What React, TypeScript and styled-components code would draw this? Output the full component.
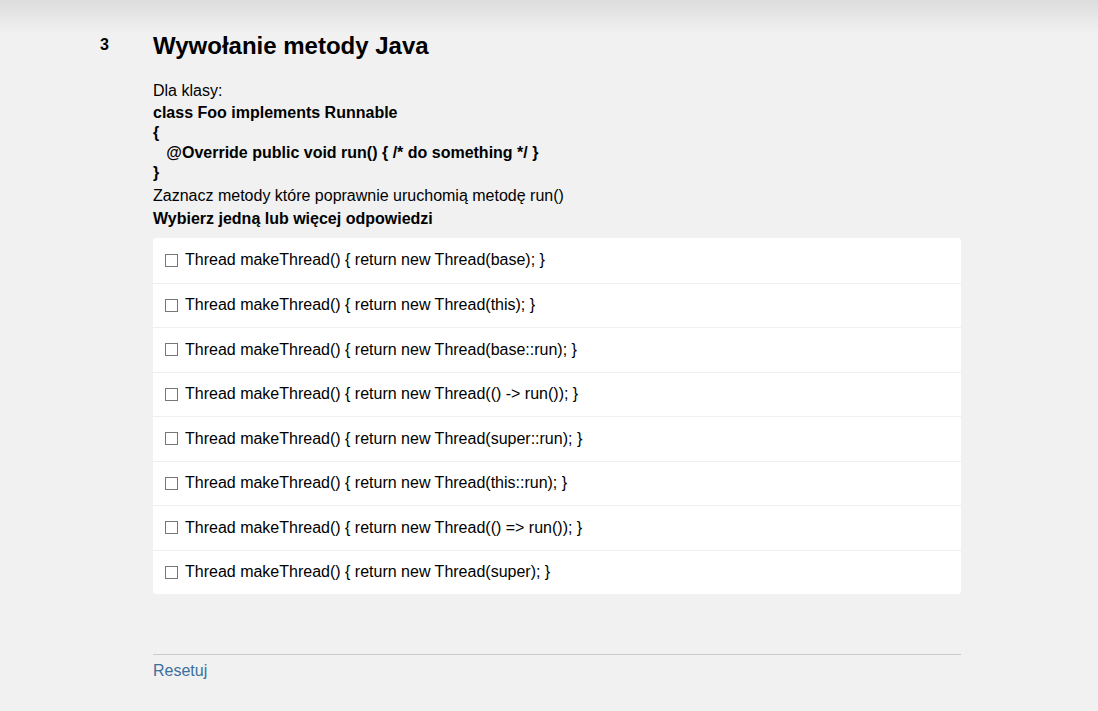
import React from "react";
import styled, { createGlobalStyle } from "styled-components";

const Global = createGlobalStyle`
  html, body { margin: 0; padding: 0; }
  body {
    background: #f1f1f1;
    font-family: "Liberation Sans", Arial, sans-serif;
    color: #000;
    min-height: 711px;
  }
`;

const Page = styled.div`
  position: relative;
  min-height: 711px;
  background: linear-gradient(to bottom, #dddddd 0px, #f1f1f1 34px, #f1f1f1 100%);
  display: flex;
  padding: 32px 0 0 100px;
  box-sizing: border-box;
`;

const Number = styled.div`
  width: 53px;
  font-size: 16px;
  font-weight: bold;
  line-height: 20px;
  padding-top: 3px;
`;

const Content = styled.div`
  width: 808px;
  display: flex;
  flex-direction: column;
`;

const Title = styled.h2`
  margin: 0;
  font-size: 24px;
  font-weight: bold;
  line-height: 28px;
`;

const Text = styled.div<{ $bold?: boolean; $mt?: number }>`
  font-size: 16px;
  line-height: 20px;
  font-weight: ${(p) => (p.$bold ? "bold" : "normal")};
  margin-top: ${(p) => p.$mt ?? 0}px;
  white-space: pre;
`;

const Card = styled.div`
  margin-top: 9px;
  background: #fff;
  border-radius: 3px;
  display: flex;
  flex-direction: column;
`;

const Row = styled.label`
  height: 44.5px;
  box-sizing: border-box;
  display: flex;
  align-items: center;
  padding: 0 12px;
  gap: 7px;
  font-size: 16px;
  & + & {
    border-top: 1px solid #efefef;
  }
`;

const Box = styled.span`
  width: 11px;
  height: 11px;
  border: 1px solid #767676;
  background: #fff;
  flex: none;
`;

const Footer = styled.div`
  margin-top: 60px;
  border-top: 1px solid #cccccc;
  padding-top: 6px;
`;

const Link = styled.a`
  color: #3b6f9d;
  font-size: 16px;
  line-height: 20px;
  text-decoration: none;
  cursor: pointer;
`;

const answers = [
  "Thread makeThread() { return new Thread(base); }",
  "Thread makeThread() { return new Thread(this); }",
  "Thread makeThread() { return new Thread(base::run); }",
  "Thread makeThread() { return new Thread(() -> run()); }",
  "Thread makeThread() { return new Thread(super::run); }",
  "Thread makeThread() { return new Thread(this::run); }",
  "Thread makeThread() { return new Thread(() => run()); }",
  "Thread makeThread() { return new Thread(super); }",
];

export default function App() {
  return (
    <>
      <Global />
      <Page>
        <Number>3</Number>
        <Content>
          <Title>Wywołanie metody Java</Title>
          <Text $mt={21}>Dla klasy:</Text>
          <Text $bold $mt={2}>class Foo implements Runnable</Text>
          <Text $bold>{"{"}</Text>
          <Text $bold>{"   @Override public void run() { /* do something */ }"}</Text>
          <Text $bold>{"}"}</Text>
          <Text $mt={3}>Zaznacz metody które poprawnie uruchomią metodę run()</Text>
          <Text $bold $mt={3}>Wybierz jedną lub więcej odpowiedzi</Text>
          <Card>
            {answers.map((a, i) => (
              <Row key={i}>
                <Box />
                <span>{a}</span>
              </Row>
            ))}
          </Card>
          <Footer>
            <Link>Resetuj</Link>
          </Footer>
        </Content>
      </Page>
    </>
  );
}
